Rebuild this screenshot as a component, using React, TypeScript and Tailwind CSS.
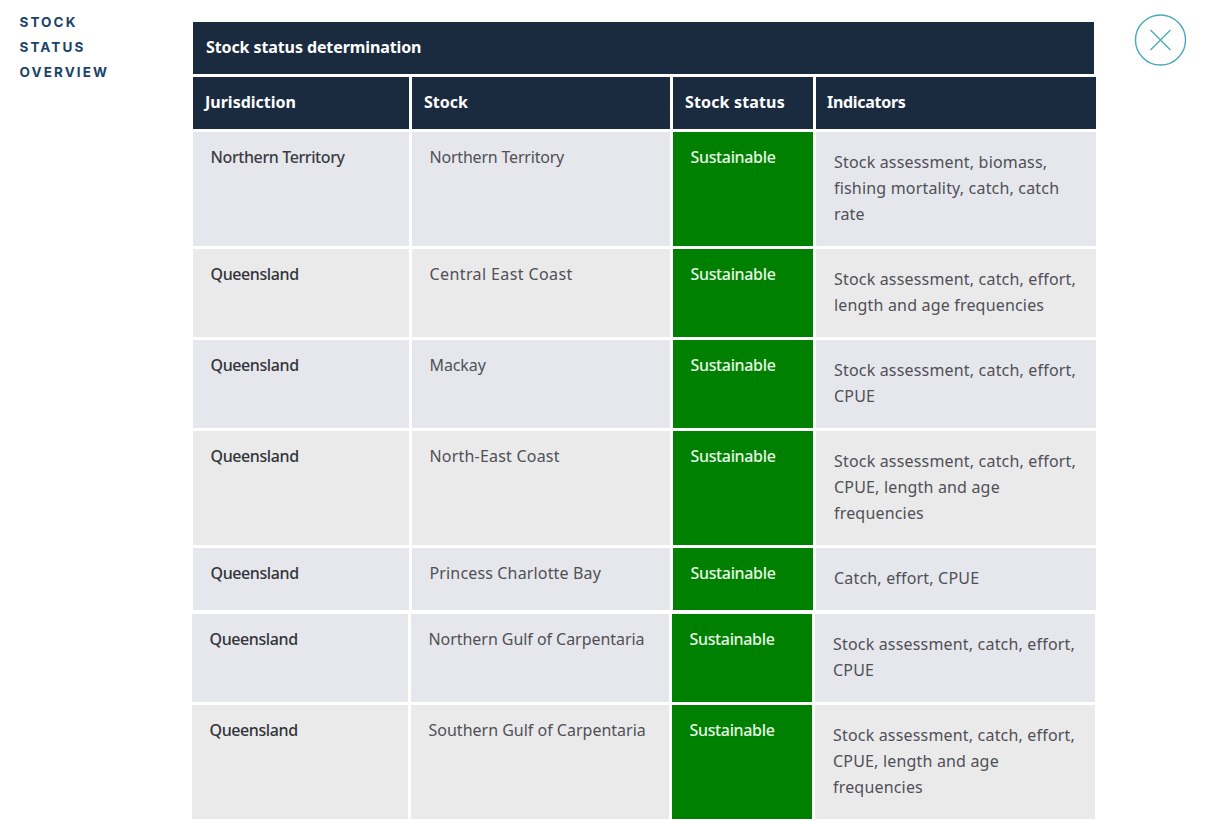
const rows1 = [
  { j: "Northern Territory", s: "Northern Territory", st: "tracking-[-0.2px]", i: "Stock assessment, biomass, fishing mortality, catch, catch rate", bg: "bg-[#e6e7ec]", medium: false },
  { j: "Queensland", s: "Central East Coast", st: "tracking-[0.4px]", i: "Stock assessment, catch, effort, length and age frequencies", bg: "bg-[#eaeaeb]", medium: true },
  { j: "Queensland", s: "Mackay", st: "tracking-[-0.1px]", i: "Stock assessment, catch, effort, CPUE", bg: "bg-[#e6e7ec]", medium: true },
  { j: "Queensland", s: "North-East Coast", st: "tracking-[0.2px]", i: "Stock assessment, catch, effort, CPUE, length and age frequencies", bg: "bg-[#eaeaeb]", medium: true },
  { j: "Queensland", s: "Princess Charlotte Bay", st: "tracking-[0.15px]", i: "Catch, effort, CPUE", bg: "bg-[#e6e7ec]", medium: true },
];
const rows2 = [
  { j: "Queensland", s: "Northern Gulf of Carpentaria", st: "tracking-[-0.05px]", i: "Stock assessment, catch, effort, CPUE", bg: "bg-[#e6e7ec]", medium: true },
  { j: "Queensland", s: "Southern Gulf of Carpentaria", st: "tracking-[0px]", i: "Stock assessment, catch, effort, CPUE, length and age frequencies", bg: "bg-[#eaeaeb]", medium: true },
];

type R = (typeof rows1)[number];

function Row({ r }: { r: R }) {
  return (
    <div className="flex gap-[3px] text-[16px] leading-[26px]">
      <div className={`w-[216px] shrink-0 pl-[17.5px] pt-3 font-medium tracking-[-0.4px] ${r.bg} ${r.medium ? "text-[#333339]" : "text-[#3c3c44]"}`}>{r.j}</div>
      <div className={`w-[258px] shrink-0 pl-[17.5px] pt-3 text-[#505056] ${r.st} ${r.bg}`}>{r.s}</div>
      <div className="w-[140px] shrink-0 bg-[#008000] pl-[17.5px] pt-3 font-medium tracking-[-0.35px] text-[#e6f7e6]">Sustainable</div>
      <div className={`w-[280px] shrink-0 pl-[18px] pr-[12px] pt-[17px] pb-[19px] tracking-[0.18px] text-[#505056] ${r.bg}`}>{r.i}</div>
    </div>
  );
}

export default function App() {
  return (
    <div className="flex h-[821px] w-[1208px] overflow-hidden bg-white font-['Noto_Sans',sans-serif]">
      <div className="w-[193px] shrink-0 pl-[19.5px] pt-[10px] font-['Inter',sans-serif] text-[13.5px] font-bold uppercase leading-[25px] tracking-[2.1px] text-[#1b4268]">
        <div>Stock</div>
        <div>Status</div>
        <div>Overview</div>
      </div>
      <div className="w-[903px] shrink-0 pt-[22px]">
        <div className="mb-[3px] flex h-[52px] w-[901px] items-center bg-[#1b2b3f] pb-[2px] pl-[13px] text-[16px] font-bold tracking-[-0.1px] text-white">Stock status determination</div>
        <div className="mb-[3px] flex h-[52px] gap-[3px] text-[16px] font-bold text-white">
          <div className="flex w-[216px] items-center bg-[#1b2b3f] pb-[2px] pl-3">Jurisdiction</div>
          <div className="flex w-[258px] items-center bg-[#1b2b3f] pb-[2px] pl-3">Stock</div>
          <div className="flex w-[140px] items-center bg-[#1b2b3f] pb-[2px] pl-3 tracking-[0.15px]">Stock status</div>
          <div className="flex w-[280px] items-center bg-[#1b2b3f] pb-[2px] pl-[11px] tracking-[-0.3px]">Indicators</div>
        </div>
        <div className="flex flex-col gap-[3px]">
          {rows1.map((r) => <Row key={r.s} r={r} />)}
        </div>
        <div className="-ml-px mt-1 flex flex-col gap-[3px]">
          {rows2.map((r) => <Row key={r.s} r={r} />)}
        </div>
      </div>
      <div className="ml-[38px] pt-[14px]">
        <svg width="53" height="53" viewBox="0 0 53 53" fill="none" stroke="#4aa8b8">
          <circle cx="26.5" cy="26" r="25" strokeWidth="1.4" />
          <path d="M16.5 16 L36.5 36 M36.5 16 L16.5 36" strokeWidth="1.3" />
        </svg>
      </div>
    </div>
  );
}
